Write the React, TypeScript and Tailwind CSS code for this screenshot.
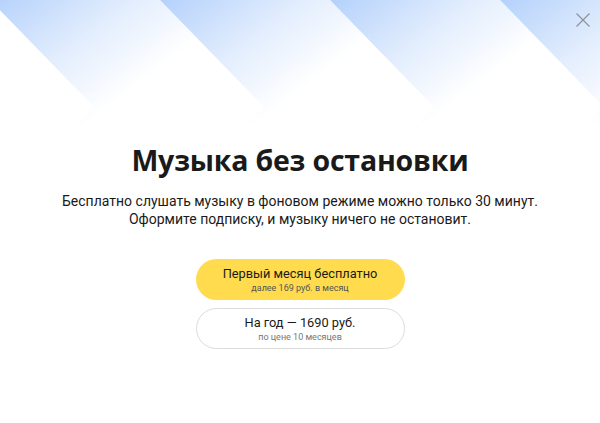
const bands = [-10, 160, 330, 500]

function Chevrons() {
  return (
    <svg className="absolute inset-0 h-full w-full" viewBox="0 0 600 423" preserveAspectRatio="none">
      <defs>
        {bands.map((x0, i) => (
          <linearGradient key={i} id={`band-${i}`} gradientUnits="userSpaceOnUse" x1={x0} y1={0} x2={x0 + 95} y2={125}>
            <stop offset="0" stopColor="#b4d1fb" />
            <stop offset="0.55" stopColor="#e2edfd" />
            <stop offset="1" stopColor="#ffffff" />
          </linearGradient>
        ))}
      </defs>
      {bands.map((x0, i) => (
        <polygon
          key={i}
          fill={`url(#band-${i})`}
          points={`${x0},0 ${x0 + 104},107 ${x0},214 ${x0 + 170},214 ${x0 + 274},107 ${x0 + 170},0`}
        />
      ))}
    </svg>
  )
}

function CloseIcon() {
  return (
    <svg width="14" height="14" viewBox="0 0 14 14" fill="none" stroke="#8d929b" strokeWidth="1.2">
      <path d="M0.5 0.5 13.5 13.5M13.5 0.5 0.5 13.5" />
    </svg>
  )
}

export default function App() {
  return (
    <div
      className="relative h-[423px] w-[600px] overflow-hidden bg-white text-[#1a1a1a]"
      style={{ fontFamily: 'Roboto, "Open Sans", sans-serif' }}
    >
      <Chevrons />
      <button className="absolute right-[10px] top-[13px]">
        <CloseIcon />
      </button>

      <div className="relative flex flex-col items-center pt-[142px]">
        <h1
          className="text-[28.5px] font-bold leading-[36px] tracking-[-0.2px]"
          style={{ fontFamily: '"Open Sans", sans-serif' }}
        >
          Музыка без остановки
        </h1>
        <p className="mt-[14px] text-center text-[14px] leading-[18px]">
          Бесплатно слушать музыку в фоновом режиме можно только 30 минут.
          <br />
          Оформите подписку, и музыку ничего не остановит.
        </p>

        <div className="mt-[31px] flex w-[209px] flex-col gap-[8px]">
          <button className="flex h-[41px] flex-col items-center justify-center rounded-full bg-[#ffdb4d]">
            <span className="text-[12.8px] leading-[16px]">Первый месяц бесплатно</span>
            <span className="text-[9px] leading-[12px] text-[#555]">далее 169 руб. в месяц</span>
          </button>
          <button className="flex h-[41px] flex-col items-center justify-center rounded-full border border-[#dcdcdc] bg-white">
            <span className="text-[12.8px] leading-[16px]">На год — 1690 руб.</span>
            <span className="text-[9px] leading-[12px] text-[#777]">по цене 10 месяцев</span>
          </button>
        </div>
      </div>
    </div>
  )
}
